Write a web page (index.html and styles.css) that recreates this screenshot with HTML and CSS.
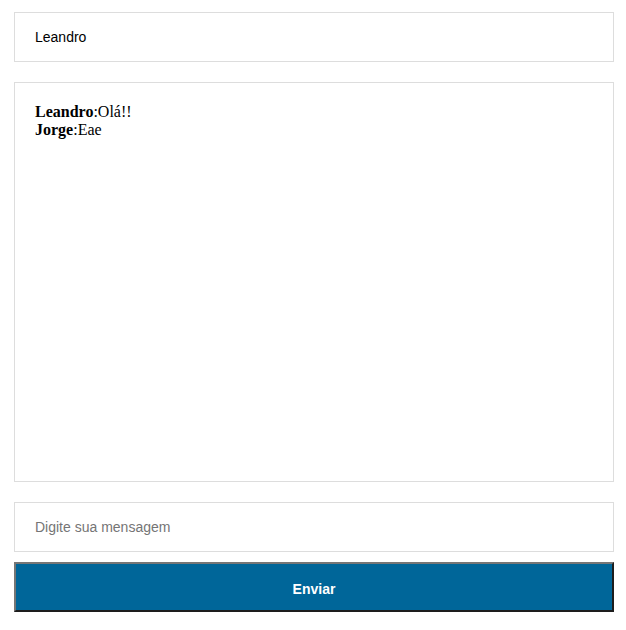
FILE: index.html
```html
<!DOCTYPE html>
<html lang="pt">
<head>
<meta charset="utf-8">
<title>Chat</title>
<link rel="stylesheet" href="styles.css">
</head>
<body>
<div class="chat">
  <input class="field" type="text" value="Leandro">
  <div class="messages">
    <div class="msg"><strong>Leandro</strong>:Olá!!</div>
    <div class="msg"><strong>Jorge</strong>:Eae</div>
  </div>
  <input class="field msg-input" type="text" placeholder="Digite sua mensagem">
  <button class="send" type="button">Enviar</button>
</div>
</body>
</html>
```

FILE: styles.css
```css
html, body {
  margin: 0;
  padding: 0;
  background: #ffffff;
}
.chat {
  width: 600px;
  padding: 12px 14px;
  display: flex;
  flex-direction: column;
}
.field {
  box-sizing: border-box;
  width: 600px;
  height: 50px;
  margin: 0 0 20px 0;
  padding: 0 20px;
  border: 1px solid #dddddd;
  font-family: "Liberation Sans", Arial, sans-serif;
  font-size: 14px;
  color: #000000;
  outline: none;
  background: #ffffff;
}
.field::placeholder {
  color: #757575;
}
.msg-input {
  margin-bottom: 10px;
}
.messages {
  box-sizing: border-box;
  width: 600px;
  height: 400px;
  margin-bottom: 20px;
  padding: 20px;
  border: 1px solid #dddddd;
  font-family: "Liberation Serif", "Times New Roman", serif;
  font-size: 16px;
  line-height: 18px;
  color: #000000;
}
.send {
  box-sizing: border-box;
  width: 600px;
  height: 50px;
  margin: 0;
  padding: 5px 6px 1px;
  border-style: solid;
  border-width: 2px;
  border-color: #767676 #1d1d1d #1d1d1d #767676;
  background: #006699;
  color: #ffffff;
  font-family: "Liberation Sans", Arial, sans-serif;
  font-size: 14px;
  font-weight: bold;
  cursor: pointer;
}
```
